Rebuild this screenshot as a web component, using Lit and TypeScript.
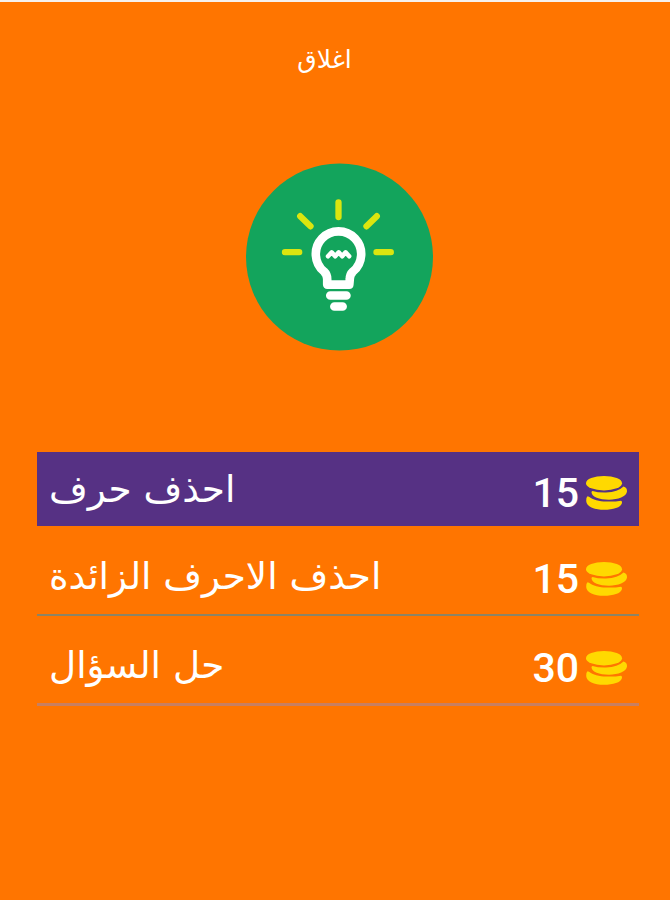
import { LitElement, html, css } from "lit";
import { customElement } from "lit/decorators.js";

@customElement("coin-stack")
class CoinStack extends LitElement {
  static styles = css`
    :host { display: block; width: 42px; height: 34px; }
    svg { display: block; }
  `;
  render() {
    return html`<svg width="42" height="34" viewBox="0 0 42 34" fill="#ffd900">
      <ellipse cx="18" cy="7.200" rx="18" ry="7.200"/>
      <path d="M6.500 15Q12 16.800 20 16.600Q32 16 37.500 10.500Q41.300 11.500 41 15.500C40.500 20.500 32 23.700 23 23.700C13 23.700 6 21 5.500 16.500Q5.400 15 6.500 15Z"/>
      <path d="M1.500 20.300Q3 20.300 4.500 21.800C9 25 17 25.700 24 25.600Q30 25.500 35 24.700Q36.300 25 36 27C35 31.500 27 33.800 18 33.800C8 33.800 0.500 30.500 0.200 25Q0 21.500 1.500 20.300Z"/>
    </svg>`;
  }
}

@customElement("app-root")
class AppRoot extends LitElement {
  static styles = css`
    :host { display: block; height: 900px; box-sizing: border-box; background: #ff7500; border-top: 2px solid #f6f1ee; color: #fff; font-family: "DejaVu Sans", sans-serif; overflow: hidden; }
    .close { text-align: center; height: 161px; box-sizing: border-box; padding: 43px 21px 0 0; font-size: 25px; line-height: 30px; }
    .bulb { display: block; margin-left: 246px; }
    .list { margin: 101px 31px 0 37px; }
    .row { display: flex; justify-content: space-between; height: 74px; box-sizing: border-box; padding: 0 11px 0 12px; align-items: center; font-size: 37.4px; line-height: 44px; }
    .active { background: #563184; }
    .line { height: 90px; border-bottom: 2px solid #8c8466; padding-top: 11px; }
    .last { border-bottom: 3px solid #c87f61; padding-top: 10px; }
    .cost { display: flex; align-items: center; gap: 7px; font: 500 41px/44px Roboto, sans-serif; padding-top: 7px; }
  `;
  row(label: string, price: number, kind: string) {
    return html`<div class="row ${kind}">
      <span dir="rtl">${label}</span>
      <span class="cost">${price}<coin-stack></coin-stack></span>
    </div>`;
  }
  render() {
    return html`<div class="close" dir="rtl">اغلاق</div>
      <svg class="bulb" width="188" height="188" viewBox="246 163 188 188" fill="none" stroke-linecap="round" stroke-linejoin="round">
        <circle cx="339.500" cy="257" r="93.500" fill="#13a45c"/>
        <path d="M285 252.200H299.200M376.500 252.200H390.800M338.500 202.300V217M300.200 216.200L310.500 226.300M376.800 216.200L366.500 226.300" stroke="#dbe50f" stroke-width="6.300"/>
        <g stroke="#fff">
          <path d="M327.200 284.600V279Q327.200 274.500 324 271.500A22.700 22.700 0 1 1 353 271.500Q349.800 274.500 349.800 279L349.300 284.600Z" stroke-width="8.600"/>
          <path d="M330.300 295.500H346.400M334.400 306.500H342.600" stroke-width="8.700"/>
          <path d="M328 256.300L331.700 252.300L335.200 256.300L338.700 252.300L342.200 256.300L345.600 252.300L349.200 256.300" stroke-width="4.500"/>
        </g>
      </svg>
      <div class="list">
        ${this.row("احذف حرف", 15, "active")}
        ${this.row("احذف الاحرف الزائدة", 15, "line")}
        ${this.row("حل السؤال", 30, "line last")}
      </div>`;
  }
}
